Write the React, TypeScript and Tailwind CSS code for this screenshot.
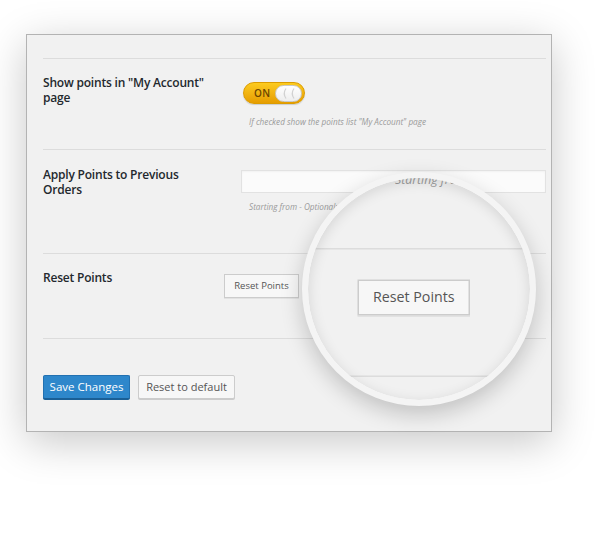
import React from "react";

const font = { fontFamily: '"Open Sans", "Noto Sans", sans-serif' };

function Toggle() {
  return (
    <div className="relative flex h-[22px] w-[62px] items-center rounded-full border border-[#dc9c00] bg-gradient-to-b from-[#fccb1f] to-[#e69d00] shadow-[0_1px_1px_rgba(0,0,0,0.15)]">
      <span className="ml-[10px] text-[10px] font-semibold leading-none tracking-[0.5px] text-[#6b4500]">ON</span>
      <div className="absolute right-[2px] top-[2px] h-[17px] w-[27px] rounded-full border border-[#c9c9c9] bg-gradient-to-b from-white to-[#eeeeee]">
        <svg width="25" height="15" viewBox="0 0 25 15" className="block">
          <path d="M10 2.5 Q6.5 7.5 10 12.5" fill="none" stroke="#d2d2d2" strokeWidth="1.2" />
          <path d="M18 2.5 Q14.5 7.5 18 12.5" fill="none" stroke="#d2d2d2" strokeWidth="1.2" />
        </svg>
      </div>
    </div>
  );
}

function Sheet() {
  return (
    <div className="h-[542px] w-[600px] bg-white pl-[26px] pt-[34px]" style={font}>
      <div className="h-[398px] w-[526px] border border-[#b3b3b3] bg-[#f1f1f1] pl-[16px] pr-[5px] pt-[23px] shadow-[0_10px_40px_rgba(0,0,0,0.22)]">
        {/* Row 1 */}
        <div className="flex h-[91px] border-t border-[#dcdcdc]">
          <div className="w-[200px] pr-[32px] pt-[16px] text-[12px] font-semibold leading-[15px] tracking-[-0.2px] text-[#23282d]">
            Show points in "My Account" page
          </div>
          <div className="pt-[23px]">
            <Toggle />
            <div className="ml-[6px] mt-[12px] whitespace-nowrap text-[8.2px] italic leading-[12px] text-[#9a9a9a]">
              If checked show the points list "My Account" page
            </div>
          </div>
        </div>
        {/* Row 2 */}
        <div className="flex h-[104px] border-t border-[#dcdcdc]">
          <div className="w-[198px] pr-[30px] pt-[17px] text-[12px] font-semibold leading-[15px] tracking-[-0.2px] text-[#23282d]">
            Apply Points to Previous Orders
          </div>
          <div className="flex-1 pt-[20px]">
            <div className="h-[23px] w-full border border-[#e2e2e2] bg-[#fbfbfb] shadow-[inset_0_1px_2px_rgba(0,0,0,0.04)]" />
            <div className="ml-[8px] mt-[8px] whitespace-nowrap text-[8.2px] italic leading-[12px] text-[#9a9a9a]">
              Starting from - Optional: If you want to apply points to orders
            </div>
          </div>
        </div>
        {/* Row 3 */}
        <div className="flex h-[85px] border-t border-[#dcdcdc]">
          <div className="w-[181px] pt-[16px] text-[12px] font-semibold leading-[15px] tracking-[-0.2px] text-[#23282d]">
            Reset Points
          </div>
          <div className="pt-[20px]">
            <button className="flex h-[24px] w-[75px] items-center justify-center border border-[#cccccc] bg-[#f7f7f7] text-[9.5px] text-[#555555] shadow-[0_1px_0_rgba(0,0,0,0.06)]">
              Reset Points
            </button>
          </div>
        </div>
        {/* Footer */}
        <div className="flex gap-[8px] border-t border-[#dcdcdc] pt-[36px]">
          <button className="flex h-[24px] w-[87px] items-center justify-center rounded-[2px] border border-[#2271b1] border-b-[#1a5f96] bg-[#2e87cb] text-[11.5px] text-white shadow-[0_1px_0_#1a5f96]">
            Save Changes
          </button>
          <button className="flex h-[24px] w-[97px] items-center justify-center rounded-[2px] border border-[#cccccc] bg-[#f7f7f7] text-[11px] text-[#555555] shadow-[0_1px_0_#cccccc]">
            Reset to default
          </button>
        </div>
      </div>
    </div>
  );
}

export default function App() {
  return (
    <div className="relative h-[542px] w-[600px] overflow-hidden bg-white">
      <Sheet />
      <div className="absolute left-[302px] top-[172px] h-[234px] w-[234px] overflow-hidden rounded-full border-[6px] border-[#f4f4f4] bg-[#f1f1f1] shadow-[0_8px_22px_rgba(0,0,0,0.2)]">
        <div className="pointer-events-none absolute left-0 top-0 h-[542px] w-[600px] origin-top-left [transform:translate(-286.5px,-309.5px)_scale(1.5)]">
          <Sheet />
        </div>
        <div className="pointer-events-none absolute inset-0 rounded-full shadow-[inset_0_3px_14px_rgba(0,0,0,0.12)]" />
      </div>
    </div>
  );
}
